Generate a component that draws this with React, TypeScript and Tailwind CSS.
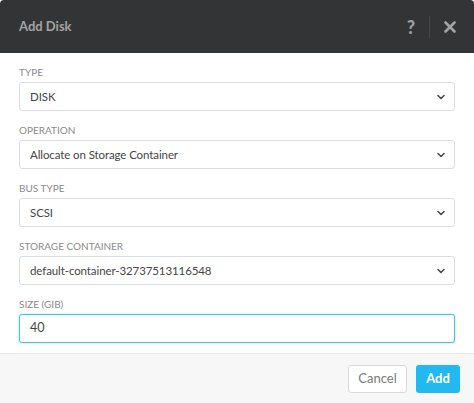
import React from 'react';

const font = { fontFamily: 'Lato, "Open Sans", "Liberation Sans", sans-serif' };

function Chevron() {
  return (
    <svg width="8" height="6" viewBox="0 0 8 6" className="shrink-0">
      <path d="M1 1.5 L4 4.5 L7 1.5" fill="none" stroke="#4a4a4a" strokeWidth="1.6" strokeLinecap="round" strokeLinejoin="round" />
    </svg>
  );
}

function SelectField({ label, value }: { label: string; value: string }) {
  return (
    <div className="flex flex-col">
      <div className="text-[10px] leading-[12px] uppercase text-[#8a8a8a] mb-[4px]">{label}</div>
      <div className="h-[29px] border border-[#dadee3] rounded-[3px] bg-white flex items-center justify-between pl-[10px] pr-[9px]">
        <span className="text-[11.5px] tracking-[-0.1px] text-[#454545]">{value}</span>
        <Chevron />
      </div>
    </div>
  );
}

export default function App() {
  return (
    <div className="w-[474px] h-[403px] bg-white flex flex-col overflow-hidden rounded-t-[4px]" style={font}>
      {/* Header */}
      <div className="h-[53px] bg-[#333436] flex items-center justify-between pl-[19px] pr-[18px] shrink-0">
        <span className="text-[13px] font-bold text-[#a3a3a3]">Add Disk</span>
        <div className="flex items-center h-full">
          <span className="text-[18px] font-black text-[#9e9e9e] leading-none">?</span>
          <div className="w-px h-[22px] bg-[#454648] mx-[14px]" />
          <svg width="12" height="12" viewBox="0 0 12 12">
            <path d="M1.5 1.5 L10.5 10.5 M10.5 1.5 L1.5 10.5" stroke="#a3a3a3" strokeWidth="2.6" strokeLinecap="round" />
          </svg>
        </div>
      </div>

      {/* Body */}
      <div className="flex flex-col gap-[13px] px-[19px] pt-[13px] pb-[10px] flex-1">
        <SelectField label="Type" value="DISK" />
        <SelectField label="Operation" value="Allocate on Storage Container" />
        <SelectField label="Bus Type" value="SCSI" />
        <SelectField label="Storage Container" value="default-container-32737513116548" />
        <div className="flex flex-col">
          <div className="text-[10px] leading-[12px] text-[#8a8a8a] mb-[4px]">SIZE (GIB)</div>
          <div className="h-[29px] border border-[#3bc3f2] rounded-[3px] bg-white flex items-center pl-[10px] shadow-[0_0_2px_rgba(38,187,240,0.5)]">
            <span className="text-[12.5px] text-[#454545]">40</span>
          </div>
        </div>
      </div>

      {/* Footer */}
      <div className="h-[50px] bg-[#f7f7f7] border-t border-[#e8e8e8] flex items-center justify-end gap-[9px] pr-[14px] shrink-0">
        <button className="h-[28px] w-[59px] bg-white border border-[#d7dbe0] rounded-[3px] text-[13px] text-[#7a7a7a]">Cancel</button>
        <button className="h-[28px] w-[44px] bg-[#22b9f0] rounded-[3px] text-[13px] font-bold text-white">Add</button>
      </div>
    </div>
  );
}
